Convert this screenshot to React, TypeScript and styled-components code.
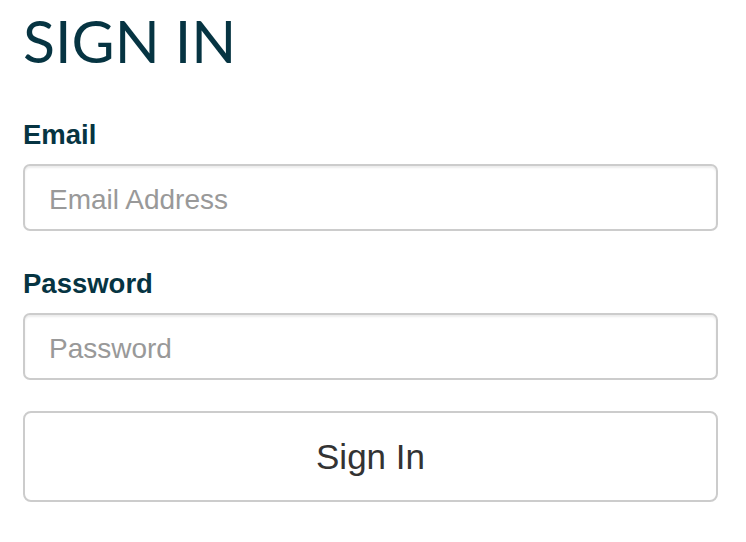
import React from "react";
import styled, { createGlobalStyle } from "styled-components";

const Global = createGlobalStyle`
  html, body { margin: 0; padding: 0; background: #fff; }
  * { box-sizing: border-box; }
`;

const Page = styled.div`
  display: flex;
  flex-direction: column;
  padding: 5px 28px 0 23px;
  font-family: "Liberation Sans", Arial, sans-serif;
`;

const Title = styled.h1`
  margin: 0 0 42px;
  font-family: Lato, "Open Sans", sans-serif;
  font-weight: 400;
  font-size: 59px;
  line-height: 72px;
  color: #063442;
`;

const Form = styled.form`
  display: flex;
  flex-direction: column;
`;

const Label = styled.label`
  display: block;
  font-weight: 700;
  font-size: 27.5px;
  line-height: 32px;
  color: #063442;
  margin-bottom: 13px;
`;

const Field = styled.div`
  display: flex;
  flex-direction: column;
  margin-bottom: 37px;
`;

const Input = styled.input`
  height: 67px;
  width: 100%;
  border: 2px solid #cccccc;
  border-radius: 7px;
  padding: 5px 24px 0;
  font-family: "Liberation Sans", Arial, sans-serif;
  font-size: 28px;
  color: #555;
  background: #fff;
  box-shadow: inset 0 2px 2px rgba(0, 0, 0, 0.075);
  outline: none;
  &::placeholder { color: #999999; }
`;

const Button = styled.button`
  margin-top: -6px;
  height: 91px;
  width: 100%;
  border: 2px solid #cccccc;
  border-radius: 8px;
  background: #fff;
  color: #333333;
  font-family: "Liberation Sans", Arial, sans-serif;
  font-size: 35px;
  cursor: pointer;
`;

export default function App() {
  return (
    <>
      <Global />
      <Page>
        <Title>SIGN IN</Title>
        <Form onSubmit={(e) => e.preventDefault()}>
          <Field>
            <Label htmlFor="email">Email</Label>
            <Input id="email" type="email" placeholder="Email Address" />
          </Field>
          <Field>
            <Label htmlFor="password">Password</Label>
            <Input id="password" type="password" placeholder="Password" />
          </Field>
          <Button type="submit">Sign In</Button>
        </Form>
      </Page>
    </>
  );
}
